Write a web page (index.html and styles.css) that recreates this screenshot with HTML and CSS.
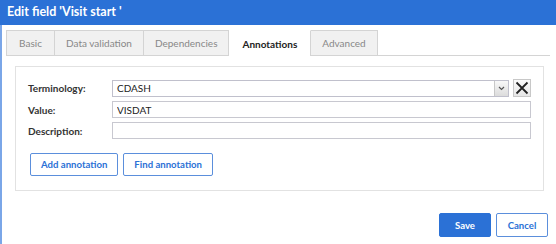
FILE: index.html
```html
<!DOCTYPE html>
<html lang="en">
<head>
  <meta charset="UTF-8">
  <title>Edit field</title>
  <link rel="stylesheet" href="styles.css">
</head>
<body>

  <div class="dialog">
    <div class="dialog-title">Edit field 'Visit start '</div>

    <div class="dialog-body">
      <div class="tabs">
        <a class="tab">Basic</a>
        <a class="tab">Data validation</a>
        <a class="tab">Dependencies</a>
        <a class="tab active">Annotations</a>
        <a class="tab">Advanced</a>
      </div>

      <div class="panel">
        <div class="form-row">
          <label>Terminology:</label>
          <div class="select-wrap">
            <div class="select">
              <span>CDASH</span>
              <span class="select-arrow">
                <svg width="7" height="5" viewBox="0 0 7 5"><path d="M1 1 L3.5 3.5 L6 1" fill="none" stroke="#555" stroke-width="1.2"/></svg>
              </span>
            </div>
            <button class="clear-btn" type="button">
              <svg width="14" height="14" viewBox="0 0 14 14"><path d="M1.5 1.5 L12.5 12.5 M12.5 1.5 L1.5 12.5" stroke="#222" stroke-width="1.8"/></svg>
            </button>
          </div>
        </div>

        <div class="form-row">
          <label>Value:</label>
          <input type="text" value="VISDAT">
        </div>

        <div class="form-row">
          <label>Description:</label>
          <input type="text" value="">
        </div>

        <div class="panel-actions">
          <button class="btn btn-outline" type="button">Add annotation</button>
          <button class="btn btn-outline" type="button">Find annotation</button>
        </div>
      </div>
    </div>

    <div class="dialog-footer">
      <button class="btn btn-primary" type="button">Save</button>
      <button class="btn btn-outline" type="button">Cancel</button>
    </div>
  </div>

</body>
</html>
```

FILE: styles.css
```css
body {
  font-family: Lato, 'Noto Sans', sans-serif;
  background-color: #ffffff;
  margin: 0;
  padding: 0;
}

.dialog {
  width: 556px;
  height: 244px;
  border-left: 2px solid #7aa6e8;
  box-sizing: border-box;
  display: flex;
  flex-direction: column;
}

.dialog-title {
  background-color: #2b71d6;
  color: white;
  font-size: 12.5px;
  font-weight: bold;
  height: 25px;
  line-height: 24px;
  margin-left: -2px;
  padding-left: 7px;
}

.dialog-body {
  padding: 5px 6px 0 4px;
}

.tabs {
  display: flex;
  height: 25px;
  border-bottom: 1px solid #d4d4d4;
}

.tab {
  display: flex;
  align-items: center;
  justify-content: center;
  padding: 0 11px;
  font-size: 10px;
  color: #888;
  background-color: #f1f1f1;
  border: 1px solid #d4d4d4;
  border-bottom: none;
  border-left: none;
}

.tab:first-child {
  border-left: 1px solid #d4d4d4;
  padding: 0;
  width: 47px;
}

.tab.active {
  background-color: #ffffff;
  color: #222;
  font-weight: bold;
  border-top-color: #ffffff;
  margin-bottom: -1px;
  padding: 0 13px;
}

.panel {
  margin: 10px 6px 0 9px;
  border: 1px solid #e2e2e2;
  padding: 12px 12px 14px 12px;
}

.form-row {
  display: flex;
  align-items: center;
  margin-bottom: 4px;
}

.form-row label {
  width: 84px;
  font-size: 10px;
  font-weight: bold;
  color: #333;
}

.form-row input {
  flex: 1;
  height: 17px;
  box-sizing: border-box;
  border: 1px solid #c8c8d0;
  font-family: Lato, 'Noto Sans', sans-serif;
  font-size: 10px;
  color: #222;
  padding: 0 4px;
  margin: 0;
}

.select-wrap {
  flex: 1;
  display: flex;
  align-items: center;
  gap: 4px;
}

.select {
  flex: 1;
  height: 17px;
  box-sizing: border-box;
  border: 1px solid #c0c0cc;
  display: flex;
  align-items: center;
  justify-content: space-between;
  font-size: 10px;
  color: #222;
  padding-left: 4px;
}

.select-arrow {
  width: 13px;
  height: 15px;
  background: linear-gradient(#f8f8f8, #dcdcdc);
  border-left: 1px solid #c8c8c8;
  display: flex;
  align-items: center;
  justify-content: center;
}

.clear-btn {
  width: 18px;
  height: 18px;
  padding: 0;
  border: 1px solid #c8c8c8;
  background: linear-gradient(#fbfbfb, #e6e6e6);
  display: flex;
  align-items: center;
  justify-content: center;
}

.panel-actions {
  display: flex;
  gap: 5px;
  margin-top: 14px;
  padding-left: 2px;
}

.btn {
  font-family: Lato, 'Noto Sans', sans-serif;
  font-size: 9.6px;
  font-weight: bold;
  height: 23px;
  padding: 0 10px;
  border-radius: 2px;
  cursor: pointer;
}

.btn-outline {
  background-color: #ffffff;
  color: #2b71d6;
  border: 1px solid #5b8fdc;
}

.btn-primary {
  background-color: #2b71d6;
  color: #ffffff;
  border: 1px solid #2b71d6;
}

.dialog-footer {
  display: flex;
  justify-content: flex-end;
  gap: 5px;
  margin-top: auto;
  padding: 0 8px 7px 0;
}

.dialog-footer .btn {
  width: 52px;
  height: 24px;
  padding: 0;
}
```
